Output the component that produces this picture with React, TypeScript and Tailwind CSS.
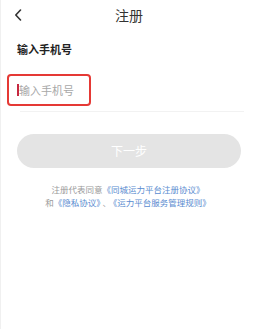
import React from "react";

export default function App() {
  return (
    <div
      className="w-[254px] h-[329px] bg-white border-l border-[#f0f0f0] overflow-hidden"
      style={{ fontFamily: '"Noto Sans CJK SC", "Noto Sans", sans-serif' }}
    >
      <div className="grid grid-cols-[1fr_auto_1fr] items-center h-[26px] mt-[2px]">
        <div className="pl-[13px] flex items-center">
          <svg width="8" height="12" viewBox="0 0 8 12" fill="none">
            <path d="M6.5 1 L1.8 6 L6.5 11" stroke="#333" strokeWidth="1.6" strokeLinecap="round" strokeLinejoin="round" />
          </svg>
        </div>
        <div className="text-[14px] leading-[18px] text-[#333] pl-[3px]">注册</div>
        <div />
      </div>
      <div className="pl-[16px] mt-[14px] text-[11px] leading-[14px] font-bold text-[#222]">输入手机号</div>
      <div className="ml-[6px] mt-[18px] w-[84px] h-[32px] border-2 border-[#e53935] rounded-[4px] flex items-center pl-[8px]">
        <div className="w-[1.5px] h-[12px] bg-[#c62840]" />
        <span className="text-[11px] leading-[14px] text-[#a8a8a8] ml-[0.5px]">输入手机号</span>
      </div>
      <div className="ml-[19px] mr-[10px] mt-[5px] h-px bg-[#f2f2f2]" />
      <div className="ml-[16px] mr-[13px] mt-[22px] h-[34px] rounded-full bg-[#e4e4e4] flex items-center justify-center">
        <span className="text-[12px] text-white">下一步</span>
      </div>
      <div className="mt-[15px] text-center text-[8.5px] leading-[13px] text-[#9a9a9a] pl-[1px]">
        <div>
          注册代表同意<span className="text-[#5a8cd0]">《同城运力平台注册协议》</span>
        </div>
        <div>
          和<span className="text-[#5a8cd0]">《隐私协议》</span>
          <span className="mx-[2px]">、</span>
          <span className="text-[#5a8cd0]">《运力平台服务管理规则》</span>
        </div>
      </div>
    </div>
  );
}
